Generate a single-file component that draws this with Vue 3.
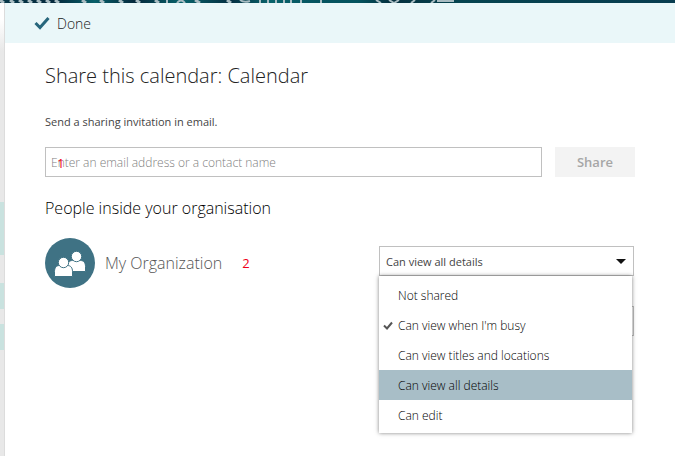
<script setup>
import { ref } from 'vue'

const levels = [
  'Not shared',
  "Can view when I'm busy",
  'Can view titles and locations',
  'Can view all details',
  'Can edit'
]

const email = ref('')
const checked = ref("Can view when I'm busy")
const permission = ref('Can view all details')
const otherPermission = ref('')

const choose = (level) => {
  checked.value = level
  permission.value = level
}
</script>

<template>
  <div class="calendar-page">
    <svg class="banner" viewBox="0 0 675 3" preserveAspectRatio="xMinYMin slice" aria-hidden="true">
      <defs>
        <linearGradient id="banner-fill">
          <stop offset="0" stop-color="#06394a" />
          <stop offset="0.08" stop-color="#04283c" />
          <stop offset="0.14" stop-color="#08606a" />
          <stop offset="0.2" stop-color="#04283c" />
          <stop offset="0.27" stop-color="#08636b" />
          <stop offset="0.34" stop-color="#042f42" />
          <stop offset="0.4" stop-color="#08636b" />
          <stop offset="0.47" stop-color="#065460" />
          <stop offset="0.53" stop-color="#04545f" />
          <stop offset="0.58" stop-color="#04303f" />
          <stop offset="0.68" stop-color="#064450" />
          <stop offset="1" stop-color="#083d50" />
        </linearGradient>
      </defs>
      <rect width="675" height="3" fill="url(#banner-fill)" />
      <g fill="none" stroke="#a9bcc2">
        <path
          d="M0 0l4 3M10 0l4 3M19 0l4 3M28 0l4 3M37 0l4 3M46 0l4 3M55 0l4 3M82 0l4 3M100 0l4 3M119 0l4 3M136 0l4 3M155 0l4 3M195 0l5 3M227 0l4 3"
          stroke-width="3"
        />
        <path
          d="M167 0v3M177 3q4-5 8 0M240 0q4 3 10 1M260 0v3M268 0v3M276 0v3M284 0v3M291 0v3M301 0v3M321 0v3M376 0l5 3M389 0l5 3l5-3M415 0l-4 3M435 0l-4 3M437 1h17"
          stroke-width="2"
        />
      </g>
    </svg>

    <div class="workspace">
      <div class="backdrop" aria-hidden="true">
        <span class="event event--long"></span>
        <span class="event"></span>
        <span class="event"></span>
      </div>

      <main class="panel">
        <header class="toolbar">
          <button type="button" class="done-btn">
            <svg class="done-btn__icon" viewBox="0 0 16 14" aria-hidden="true">
              <path d="M1.5 7L6 11.500L14.500 2" fill="none" stroke="#27667c" stroke-width="3" />
            </svg>
            Done
          </button>
        </header>

        <div class="content">
          <h1 class="title">Share this calendar: Calendar</h1>

          <form class="invite" @submit.prevent>
            <label for="invite-email" class="invite__label">Send a sharing invitation in email.</label>
            <div class="invite__row">
              <div class="invite__field">
                <input
                  id="invite-email"
                  v-model="email"
                  type="text"
                  placeholder="Enter an email address or a contact name"
                />
                <span class="marker marker--field">1</span>
              </div>
              <button type="submit" class="share-btn" disabled>Share</button>
            </div>
          </form>

          <h2 class="subtitle">People inside your organisation</h2>

          <div class="person">
            <svg class="avatar" viewBox="0 0 50 50" aria-hidden="true">
              <circle cx="25" cy="25" r="25" fill="#3f7284" />
              <g fill="#fff" stroke="#3f7284" stroke-width="1">
                <path d="M22.5 33.5v-5c0-4 2-6 5-6h8c3 0 5 2 5 6v5z" />
                <circle cx="31.500" cy="18.500" r="5.200" />
                <path d="M9.500 38.500v-5c0-4 2-6 5-6h8c3 0 5 2 5 6v5z" />
                <circle cx="18.500" cy="24.500" r="5.200" />
              </g>
            </svg>
            <label for="org-permission" class="person__name">My Organization</label>
            <span class="marker">2</span>

            <div class="picker">
              <select id="org-permission" v-model="permission">
                <option v-for="level in levels" :key="level">{{ level }}</option>
              </select>
              <svg class="picker__arrow" viewBox="0 0 10 5" aria-hidden="true">
                <path d="M0 0h10L5 5z" fill="#111" />
              </svg>

              <ul class="menu">
                <li v-for="level in levels" :key="level">
                  <button
                    type="button"
                    :class="['menu__item', { active: level === permission }]"
                    @click="choose(level)"
                  >
                    <span class="menu__check">
                      <svg v-if="level === checked" viewBox="0 0 10 9" aria-hidden="true">
                        <path d="M1 4.500L4 7.500L9 1.500" fill="none" stroke="#555" stroke-width="2" />
                      </svg>
                    </span>
                    {{ level }}
                  </button>
                </li>
              </ul>
            </div>
          </div>

          <div class="person">
            <div class="picker">
              <select v-model="otherPermission" aria-label="Permission"></select>
            </div>
          </div>
        </div>
      </main>
    </div>
  </div>
</template>

<style>
body {
  margin: 0;
  background: #fff;
}
</style>

<style scoped>
.calendar-page {
  display: flex;
  flex-direction: column;
  min-height: 100vh;
  overflow: hidden;
  font-family: "Open Sans", "Noto Sans", sans-serif;
  font-size: 11px;
  color: #444;
}

button,
input,
select {
  font-family: inherit;
  font-size: 11px;
}

.banner {
  display: block;
  width: 100%;
  height: 3px;
}

.workspace {
  display: flex;
  flex: 1;
}

.backdrop {
  display: flex;
  flex-direction: column;
  gap: 15px;
  width: 4px;
  padding-top: 199px;
  background: linear-gradient(#fff 16px, #e8e8e8 48px);
  border-right: 1px solid #dcdcdc;
}

.event {
  height: 26px;
  background: #c9e2df;
}

.event--long {
  height: 53px;
  margin-bottom: 13px;
}

.panel {
  flex: 1;
  min-width: 0;
}

.toolbar {
  display: flex;
  height: 40px;
  padding: 0 29px;
  background: #eaf7f9;
}

.done-btn {
  display: flex;
  align-items: center;
  gap: 7px;
  padding: 0;
  border: none;
  background: none;
  color: #222;
  font-size: 14px;
  font-weight: 300;
  cursor: pointer;
}

.done-btn__icon {
  width: 16px;
  height: 14px;
}

.content {
  padding: 19px 40px 20px;
}

.title {
  margin: 0;
  font-size: 20px;
  font-weight: 300;
  line-height: 28px;
  color: #222;
}

.invite__label {
  display: block;
  margin-top: 22px;
  line-height: 20px;
}

.invite__row {
  display: flex;
  gap: 13px;
  margin-top: 15px;
}

.invite__field {
  position: relative;
  flex: 1;
}

.invite__field input {
  box-sizing: border-box;
  display: block;
  width: 100%;
  height: 30px;
  padding: 0 5px;
  border: 1px solid #c0c0c0;
  border-radius: 0;
  font-size: 12px;
  font-weight: 300;
}

.invite__field input::placeholder {
  color: #808080;
}

.share-btn {
  width: 80px;
  border: none;
  background: #f3f3f3;
  color: #a6a6a6;
  font-size: 13px;
  font-weight: 600;
}

.marker {
  color: #f00018;
  font-size: 13px;
  line-height: 20px;
}

.marker--field {
  position: absolute;
  top: 6px;
  left: 12px;
}

.subtitle {
  margin: 20px 0 19px;
  font-size: 16px;
  font-weight: 300;
  line-height: 22px;
  color: #000;
}

.person {
  display: flex;
  align-items: center;
  height: 50px;
  margin-bottom: 10px;
}

.avatar {
  width: 50px;
  height: 50px;
}

.person__name {
  margin: 0 20px 0 10px;
  font-size: 16px;
  font-weight: 300;
  color: #555;
}

.picker {
  position: relative;
  align-self: flex-start;
  width: 255px;
  margin: 8px 1px 0 auto;
}

.picker select {
  box-sizing: border-box;
  display: block;
  width: 100%;
  height: 30px;
  padding: 0 6px;
  border: 1px solid #c0c0c0;
  border-radius: 0;
  background: #fff;
  color: #444;
  appearance: none;
}

.picker__arrow {
  position: absolute;
  top: 13px;
  right: 8px;
  width: 10px;
  height: 5px;
  pointer-events: none;
}

.menu {
  position: absolute;
  z-index: 1;
  top: 30px;
  left: 0;
  right: 2px;
  margin: 0;
  padding: 4px 0 3px;
  list-style: none;
  background: #fff;
  box-shadow: 0 0 4px rgba(0, 0, 0, 0.5);
}

.menu__item {
  display: flex;
  align-items: center;
  width: 100%;
  height: 30px;
  padding: 0 4px;
  border: none;
  background: none;
  color: #000;
  font-size: 12px;
  font-weight: 300;
  text-align: left;
  cursor: pointer;
}

.menu__item.active {
  background: #a8bec7;
}

.menu__check {
  width: 15px;
}

.menu__check svg {
  display: block;
  width: 10px;
  height: 9px;
}
</style>
